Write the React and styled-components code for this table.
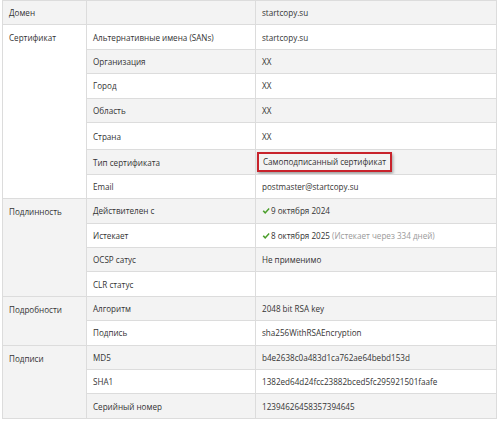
import React from 'react';
import styled, { createGlobalStyle } from 'styled-components';

const GlobalStyle = createGlobalStyle`
    html, body {
        margin: 0;
        padding: 0;
        background: #fff;
    }
    body {
        font-family: "Open Sans", "Liberation Sans", sans-serif;
        color: #333;
    }
`;

const Page = styled.div`
    width: 500px;
    height: 421px;
    overflow: hidden;
    padding-left: 2px;
    box-sizing: border-box;
`;

const Table = styled.table`
    width: 495px;
    border-collapse: collapse;
    table-layout: fixed;
    font-size: 8.1px;
    border: 1px solid #dcdcdc;
`;

const Row = styled.tr`
    height: ${({ tall }) => (tall ? '27.5px' : '24.4px')};
    background: ${({ striped }) => (striped ? '#f3f3f3' : '#fff')};
`;

const Cell = styled.td`
    border: 1px solid #dcdcdc;
    padding: 0 6px;
    vertical-align: ${({ top }) => (top ? 'top' : 'middle')};
    padding-top: ${({ top }) => (top ? '7px' : '0')};
    white-space: nowrap;
    overflow: hidden;
`;

const Highlight = styled.span`
    display: inline-block;
    margin-left: -5px;
    padding: 2px 4px 3px 4px;
    border: 2px solid #c8232c;
    box-shadow: 1px 2px 3px rgba(0, 0, 0, 0.35);
`;

const Muted = styled.span`
    color: #9a9a9a;
`;

const Check = styled.svg`
    width: 8px;
    height: 8px;
    margin-right: 1px;
    vertical-align: -1px;
`;

const CheckMark = () => (
    <Check viewBox="0 0 10 10">
        <path d="M0.8 5.4 L2.3 4 L4 5.8 L8.3 1.2 L9.6 2.5 L4 8.6 Z" fill="#4a9e2a" />
    </Check>
);

const groups = [
    {
        title: 'Домен',
        rows: [['', 'startcopy.su']],
    },
    {
        title: 'Сертификат',
        rows: [
            ['Альтернативные имена (SANs)', 'startcopy.su'],
            ['Организация', 'XX'],
            ['Город', 'XX'],
            ['Область', 'XX'],
            ['Страна', 'XX', 'tall'],
            ['Тип сертификата', <Highlight>Самоподписанный сертификат</Highlight>],
            ['Email', 'postmaster@startcopy.su'],
        ],
    },
    {
        title: 'Подлинность',
        rows: [
            ['Действителен с', <><CheckMark />9 октября 2024</>],
            ['Истекает', <><CheckMark />8 октября 2025 <Muted>(Истекает через 334 дней)</Muted></>],
            ['OCSP сатус', 'Не применимо'],
            ['CLR статус', ''],
        ],
    },
    {
        title: 'Подробности',
        rows: [
            ['Алгоритм', '2048 bit RSA key'],
            ['Подпись', 'sha256WithRSAEncryption'],
        ],
    },
    {
        title: 'Подписи',
        rows: [
            ['MD5', 'b4e2638c0a483d1ca762ae64bebd153d'],
            ['SHA1', '1382ed64d24fcc23882bced5fc295921501faafe'],
            ['Серийный номер', '12394626458357394645'],
        ],
    },
];

const App = () => {
    let index = 0;
    return (
        <Page>
            <GlobalStyle />
            <Table>
                <colgroup>
                    <col style={{ width: '84px' }} />
                    <col style={{ width: '169px' }} />
                    <col />
                </colgroup>
                <tbody>
                    {groups.map((group) =>
                        group.rows.map((row, i) => {
                            const striped = index % 2 === 0;
                            index += 1;
                            return (
                                <Row key={group.title + i} striped={striped} tall={row[2] === 'tall'}>
                                    {i === 0 && (
                                        <Cell rowSpan={group.rows.length} top={group.rows.length > 1}>
                                            {group.title}
                                        </Cell>
                                    )}
                                    <Cell>{row[0]}</Cell>
                                    <Cell>{row[1]}</Cell>
                                </Row>
                            );
                        })
                    )}
                </tbody>
            </Table>
        </Page>
    );
};

export default App;
